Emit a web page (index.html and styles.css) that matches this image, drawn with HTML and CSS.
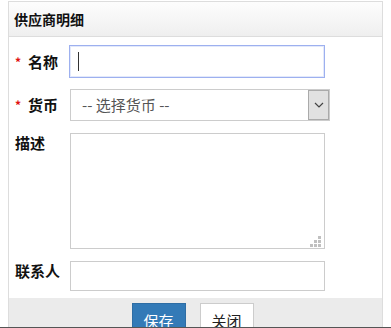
FILE: index.html
```html
<!DOCTYPE html>
<html lang="zh-CN">
<head>
    <meta charset="UTF-8">
    <title>供应商明细</title>
    <link rel="stylesheet" href="styles.css">
</head>
<body>
    <div class="panel">
        <div class="panel-heading">供应商明细</div>
        <div class="panel-body">
            <div class="row row-name">
                <label class="lbl"><span class="req">*</span>名称</label>
                <div class="field focus"><span class="caret"></span></div>
            </div>
            <div class="row row-currency">
                <label class="lbl"><span class="req">*</span>货币</label>
                <div class="select">
                    <span class="select-text">-- 选择货币 --</span>
                    <span class="select-arrow">
                        <svg width="10" height="6" viewBox="0 0 10 6"><path d="M1 1 L5 5 L9 1" fill="none" stroke="#444" stroke-width="1.2"/></svg>
                    </span>
                </div>
            </div>
            <div class="row row-top">
                <label class="lbl lbl-plain">描述</label>
                <div class="textarea">
                    <svg class="grip" width="11" height="11" viewBox="0 0 11 11" fill="#c0c0c0">
                        <rect x="8" y="0" width="3" height="3"/>
                        <rect x="4" y="4" width="3" height="3"/><rect x="8" y="4" width="3" height="3"/>
                        <rect x="0" y="8" width="3" height="3"/><rect x="4" y="8" width="3" height="3"/><rect x="8" y="8" width="3" height="3"/>
                    </svg>
                </div>
            </div>
            <div class="row row-top row-contact">
                <label class="lbl lbl-plain">联系人</label>
                <div class="field field-contact"></div>
            </div>
        </div>
        <div class="panel-footer">
            <button class="btn btn-primary">保存</button>
            <button class="btn btn-default">关闭</button>
        </div>
    </div>
    <div class="window-edge"></div>
</body>
</html>
```

FILE: styles.css
```css
body {
    margin: 1px 8px 0;
    font-family: "Microsoft YaHei", "Noto Sans CJK SC", "Noto Sans", sans-serif;
    background: #fff;
    overflow: hidden;
}
.panel {
    border: 1px solid #ddd;
    border-bottom: none;
    background: #fff;
}
.panel-heading {
    height: 34px;
    line-height: 34px;
    padding-left: 5px;
    font-size: 14px;
    font-weight: bold;
    color: #111;
    background: linear-gradient(#fdfdfd, #efefef);
    border-bottom: 1px solid #ddd;
}
.panel-body {
    padding: 8px 0 7px;
}
.row {
    display: flex;
    align-items: center;
    margin-bottom: 11px;
}
.row:last-child {
    margin-bottom: 0;
}
.row-currency {
    margin-bottom: 12px;
}
.row-top {
    align-items: flex-start;
    margin-bottom: 12px;
}
.lbl {
    width: 61px;
    box-sizing: border-box;
    padding-left: 6px;
    font-size: 15px;
    font-weight: bold;
    color: #111;
    line-height: 18px;
    flex: none;
}
.lbl-plain {
    padding-top: 1px;
}
.req {
    display: inline-block;
    width: 13px;
    color: #e01010;
    font-size: 12px;
    vertical-align: 1px;
}
.field {
    height: 31px;
    width: 253px;
    border: 1px solid #ccc;
    box-sizing: content-box;
}
.field.focus {
    margin-left: -1px;
    width: 254px;
    border-color: #9db0ef;
    box-shadow: inset 0 0 0 1px #e3e9fb;
    display: flex;
    align-items: center;
}
.caret {
    margin-left: 8px;
    width: 1px;
    height: 19px;
    background: #333;
}
.field-contact {
    height: 28px;
}
.select {
    display: flex;
    width: 258px;
    height: 30px;
    border: 1px solid #ccc;
}
.select-text {
    flex: 1;
    padding-left: 11px;
    font-size: 15px;
    line-height: 30px;
    color: #555;
}
.select-arrow {
    width: 19px;
    background: #e1e1e1;
    border: 1px solid #aaa;
    display: flex;
    align-items: center;
    justify-content: center;
}
.textarea {
    position: relative;
    width: 253px;
    height: 114px;
    border: 1px solid #ccc;
}
.grip {
    position: absolute;
    right: 3px;
    bottom: 1px;
}
.panel-footer {
    height: 40px;
    background: #ebebeb;
    display: flex;
    justify-content: center;
    align-items: flex-start;
    gap: 14px;
    padding: 5px 6px 0 0;
    box-sizing: border-box;
}
.btn {
    width: 54px;
    height: 34px;
    font-family: inherit;
    font-size: 15px;
    border: 1px solid #ccc;
    padding: 0;
}
.btn-primary {
    background: #337ab7;
    border-color: #2e6da4;
    color: #fff;
}
.btn-default {
    background: #fff;
    color: #222;
}
.window-edge {
    position: fixed;
    left: 0;
    right: 0;
    bottom: 0;
    height: 1px;
    background: #555;
}
```
